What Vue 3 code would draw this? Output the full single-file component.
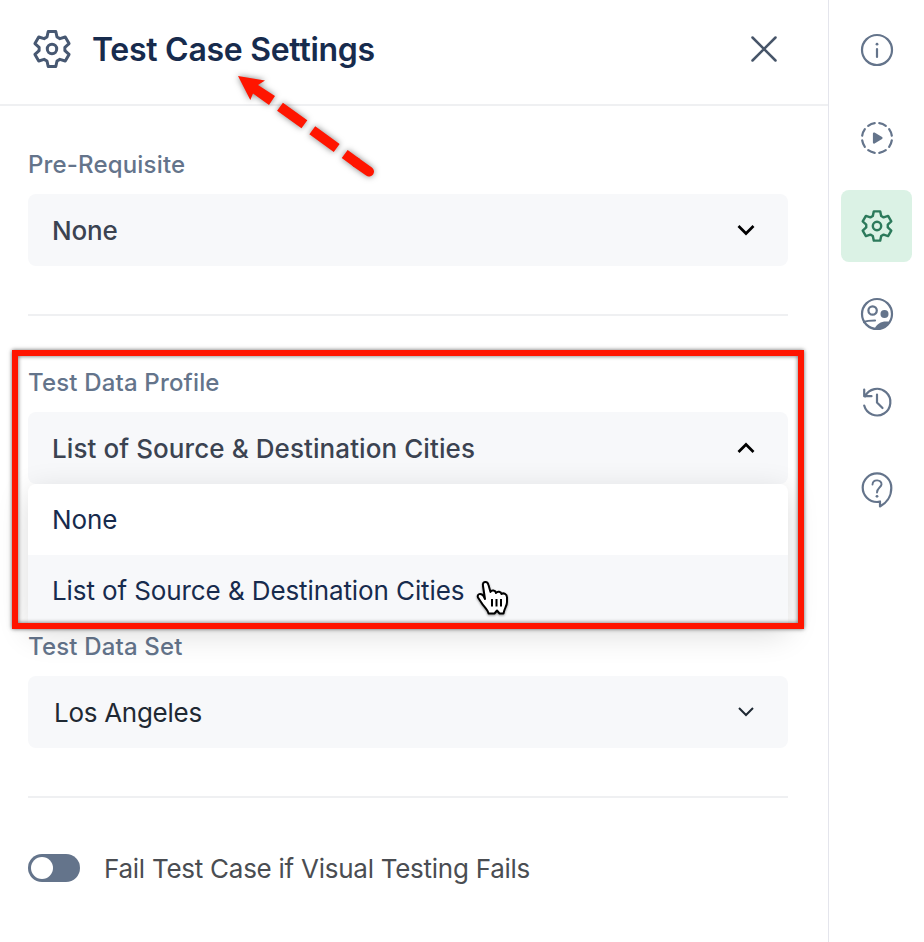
<template>
  <div class="screen">
    <main class="panel">
      <header class="panel-header">
        <svg class="header-gear" viewBox="-20 -20 40 40">
          <path :d="gearPath" />
          <circle r="4.7" />
        </svg>
        <h1 class="panel-title">Test Case Settings</h1>
        <button class="close-button" aria-label="Close">
          <svg viewBox="0 0 28 28"><path d="M2.5 2.5l23 23M25.5 2.5l-23 23" /></svg>
        </button>
      </header>

      <div class="panel-body">
        <!-- Pre-requisite -->
        <section class="field">
          <label class="field-label">Pre-Requisite</label>
          <div class="select medium">
            <span class="select-value">None</span>
            <svg class="chevron" viewBox="0 0 20 12"><path d="M2.5 2L10 9.5L17.5 2" /></svg>
          </div>
        </section>

        <div class="divider"></div>

        <!-- Test data profile, opened -->
        <section class="field profile-field">
          <label class="field-label">Test Data Profile</label>
          <div class="select medium" @click="open = !open">
            <span class="select-value wide">{{ profile }}</span>
            <svg class="chevron" viewBox="0 0 20 12"><path d="M2.5 10L10 2.5L17.5 10" /></svg>
          </div>
          <ul v-if="open" class="menu">
            <li
              v-for="option in profiles"
              :key="option"
              class="menu-item"
              :class="{ active: option === profile }"
              @click="profile = option"
            >
              <span>{{ option }}</span>
            </li>
          </ul>
          <div class="highlight-box"></div>
          <svg class="cursor" viewBox="0 0 34 38">
            <path
              d="M9 20L7 7C6 2 11.5 1.500 12.500 6L14.500 13C15.500 10.500 19.500 11 20 14C21.500 12 25 12.500 25.500 15C27.500 13.500 31 15 31 18.500V23C31 27 28.500 29 27.500 34.500H23.500L21 31.500L18.500 34.500H12.500C12 30.500 7.500 27.500 5 23L2 18.500C0.500 15 5 13.500 7.500 17Z"
            />
            <path class="cursor-lines" d="M16 20v7.500M20.500 20v7.500M25 20v7.500" />
          </svg>
        </section>

        <!-- Test data set -->
        <section class="field set-field">
          <label class="field-label">Test Data Set</label>
          <div class="select regular">
            <span class="select-value">Los Angeles</span>
            <svg class="chevron thin" viewBox="0 0 20 12"><path d="M3 2L10 9L17 2" /></svg>
          </div>
        </section>

        <div class="divider"></div>

        <div class="toggle-row">
          <button class="toggle" :class="{ on: failOnVisual }" @click="failOnVisual = !failOnVisual">
            <span class="knob"></span>
          </button>
          <span class="toggle-label">Fail Test Case if Visual Testing Fails</span>
        </div>
      </div>
    </main>

    <aside class="rail">
      <button class="rail-item">
        <svg viewBox="-18 -18 36 36">
          <circle r="15" />
          <path d="M0 -1V7" />
          <circle class="solid" cy="-5.8" r="1.4" />
        </svg>
      </button>
      <button class="rail-item">
        <svg viewBox="-18 -18 36 36">
          <circle r="15" pathLength="80" stroke-dasharray="6 4" stroke-dashoffset="-2" />
          <path class="solid joined" d="M-3 -4.5L4.5 0L-3 4.5Z" />
        </svg>
      </button>
      <button class="rail-item selected">
        <svg viewBox="-21.5 -21.5 43 43">
          <path :d="gearPath" />
          <circle r="5" />
        </svg>
      </button>
      <button class="rail-item">
        <svg viewBox="-18 -18 36 36">
          <circle r="15" />
          <circle cx="-4.4" cy="-3.5" r="4.2" />
          <circle class="solid" cx="7.5" cy="0" r="4" />
          <path d="M-13 8C-10 6.500 -6 6.500 -2 6.500" />
          <path class="solid" d="M-2.500 15C0 9 6 6.500 13 8C10 13 5 16 -2.500 15Z" />
        </svg>
      </button>
      <button class="rail-item">
        <svg viewBox="-18 -18 36 36">
          <path d="M-12 -5.500A13.300 13.300 0 1 1 -12.800 3.500M-12.800 -12.500V-5.800H-5.500M0 -7.500V0.500L5.500 6" />
        </svg>
      </button>
      <button class="rail-item">
        <svg viewBox="-18 -18 36 36">
          <path d="M3 11.5V16.500C9 13.500 14.300 7 14.300 -2A14.300 14.300 0 1 0 0 12Q1.500 12 3 11.500Z" />
          <path class="fine" d="M-4.500 -5.500C-4 -11.500 5 -10.500 4.500 -5.500C4 -2.500 0 -2 0 2.500" />
          <circle class="solid" cy="6.300" r="1.400" />
        </svg>
      </button>
    </aside>

    <svg class="arrow" viewBox="0 0 160 120">
      <path d="M8 6L35 10.5L28 15L45 26L39 35L23 23.5L20.3 30Z" />
      <path class="dash" d="M50 36.8L74.4 54.3M82.3 60.3L106.7 78M114.7 84L127 93" />
      <path class="dash tail" d="M126 92.3L139 101.5" />
    </svg>
  </div>
</template>

<script setup>
import { ref } from 'vue'

const profiles = ['None', 'List of Source & Destination Cities']
const profile = ref('List of Source & Destination Cities')
const open = ref(true)
const failOnVisual = ref(false)

// One tooth, repeated every 60 degrees around the origin
const tooth = [[-5, -12], [-3.8, -17.5], [3.8, -17.5], [5, -12]]

const buildGear = () => {
  const points = []
  for (let i = 0; i < 6; i++) {
    const a = (i * Math.PI) / 3
    tooth.forEach(([x, y]) => {
      const px = x * Math.cos(a) - y * Math.sin(a)
      const py = x * Math.sin(a) + y * Math.cos(a)
      points.push(`${px.toFixed(2)} ${py.toFixed(2)}`)
    })
  }
  return `M${points.join('L')}Z`
}

const gearPath = buildGear()
</script>

<style>
body {
  margin: 0;
  background: #fff;
}
</style>

<style scoped>
.screen {
  position: relative;
  display: flex;
  width: 924px;
  height: 942px;
  overflow: hidden;
  background: #fff;
  font-family: Inter, "Liberation Sans", sans-serif;
}

button {
  border: 0;
  padding: 0;
  background: none;
  cursor: pointer;
}

svg {
  display: block;
  fill: none;
  stroke: currentColor;
  stroke-width: 2.2;
  stroke-linecap: round;
  stroke-linejoin: round;
}

.panel {
  width: 828px;
  border-right: 1px solid #e4e5ec;
}

.panel-header {
  display: flex;
  align-items: center;
  height: 106px;
  box-sizing: border-box;
  padding: 0 50px 6px 32px;
  border-bottom: 2px solid #eff0f2;
}

.header-gear {
  width: 40px;
  height: 40px;
  color: #475872;
  stroke-width: 3;
}

.panel-title {
  flex: 1;
  margin: 2px 0 0 20px;
  color: #172b4d;
  font-size: 32px;
  font-weight: 600;
  line-height: 40px;
  letter-spacing: -0.28px;
  white-space: nowrap;
}

.close-button {
  width: 28px;
  height: 28px;
  color: #475569;
}

.close-button svg {
  stroke-width: 2.5;
}

.panel-body {
  padding: 42px 40px 0 28px;
}

.field-label {
  display: block;
  height: 34px;
  margin-bottom: 12px;
  color: #64748b;
  font-size: 24px;
  font-weight: 500;
  line-height: 34px;
  letter-spacing: 0.17px;
}

.select {
  display: flex;
  align-items: center;
  justify-content: space-between;
  box-sizing: border-box;
  height: 72px;
  padding: 0 32px 0 24px;
  border-radius: 8px;
  background: #f7f8fa;
  font-size: 26px;
}

.medium {
  color: #3b4351;
  font-weight: 500;
  letter-spacing: -0.2px;
}

.wide {
  letter-spacing: 0.08px;
}

.regular {
  padding-left: 26px;
  color: #1f2933;
  letter-spacing: -0.28px;
}

.chevron {
  width: 20px;
  height: 12px;
  color: #000;
  stroke-width: 2.7;
  stroke-linecap: butt;
  stroke-linejoin: miter;
}

.thin {
  color: #1f2933;
  stroke-width: 2;
}

.divider {
  height: 2px;
  margin: 48px 0 50px;
  background: #eff0f2;
}

.profile-field {
  position: relative;
}

.menu {
  position: absolute;
  top: 118px;
  left: 0;
  right: 0;
  margin: 0;
  padding: 0;
  border-radius: 8px;
  background: #fff;
  box-shadow: 0 8px 32px rgba(0, 0, 0, 0.14);
  list-style: none;
}

.menu-item {
  height: 71px;
  padding-left: 24px;
  color: #172b4d;
  font-size: 26px;
  line-height: 71px;
  letter-spacing: -0.1px;
}

.menu-item.active {
  background: #f7f8fa;
}

.highlight-box {
  position: absolute;
  top: -16px;
  left: -16px;
  width: 780px;
  height: 267px;
  border: 6px solid #ff1500;
  box-shadow: 0 0 4px rgba(0, 0, 0, 0.6), inset 0 0 4px rgba(0, 0, 0, 0.6);
  pointer-events: none;
}

.cursor {
  position: absolute;
  top: 213px;
  left: 448px;
  width: 34px;
  height: 38px;
  fill: #fff;
  stroke: #000;
  stroke-width: 2;
  filter: drop-shadow(0 1px 1px rgba(0, 0, 0, 0.4));
}

.cursor-lines {
  stroke-linecap: butt;
}

.set-field {
  margin-top: 146px;
}

.toggle-row {
  display: flex;
  align-items: center;
  height: 28px;
  margin-top: 56px;
}

.toggle {
  display: flex;
  align-items: center;
  width: 52px;
  height: 28px;
  padding: 0 3px;
  border-radius: 14px;
  background: #64748b;
}

.toggle.on {
  justify-content: flex-end;
}

.knob {
  width: 22px;
  height: 22px;
  border-radius: 50%;
  background: #fff;
}

.toggle-label {
  margin-left: 24px;
  color: #4a4d52;
  font-size: 26px;
  letter-spacing: -0.26px;
  white-space: nowrap;
}

.rail {
  display: flex;
  flex-direction: column;
  gap: 16px;
  padding: 14px 12px;
}

.rail-item {
  display: grid;
  place-items: center;
  width: 71px;
  height: 72px;
  border-radius: 8px;
  color: #64748b;
}

.rail-item svg {
  width: 36px;
  height: 36px;
}

.rail-item.selected {
  background: #dbf2e5;
  color: #2c7a5b;
}

.rail-item.selected svg {
  stroke-width: 2.9;
}

.solid {
  fill: currentColor;
  stroke: none;
}

.solid.joined {
  stroke: currentColor;
}

.fine {
  stroke-width: 1.9;
}

.arrow {
  position: absolute;
  top: 70px;
  left: 230px;
  width: 160px;
  height: 120px;
  fill: #ff1500;
  stroke: none;
  filter: drop-shadow(0 0 3px rgba(0, 0, 0, 0.5));
  pointer-events: none;
}

.dash {
  stroke: #ff1500;
  stroke-width: 10;
  stroke-linecap: butt;
}

.tail {
  stroke-linecap: round;
}
</style>
